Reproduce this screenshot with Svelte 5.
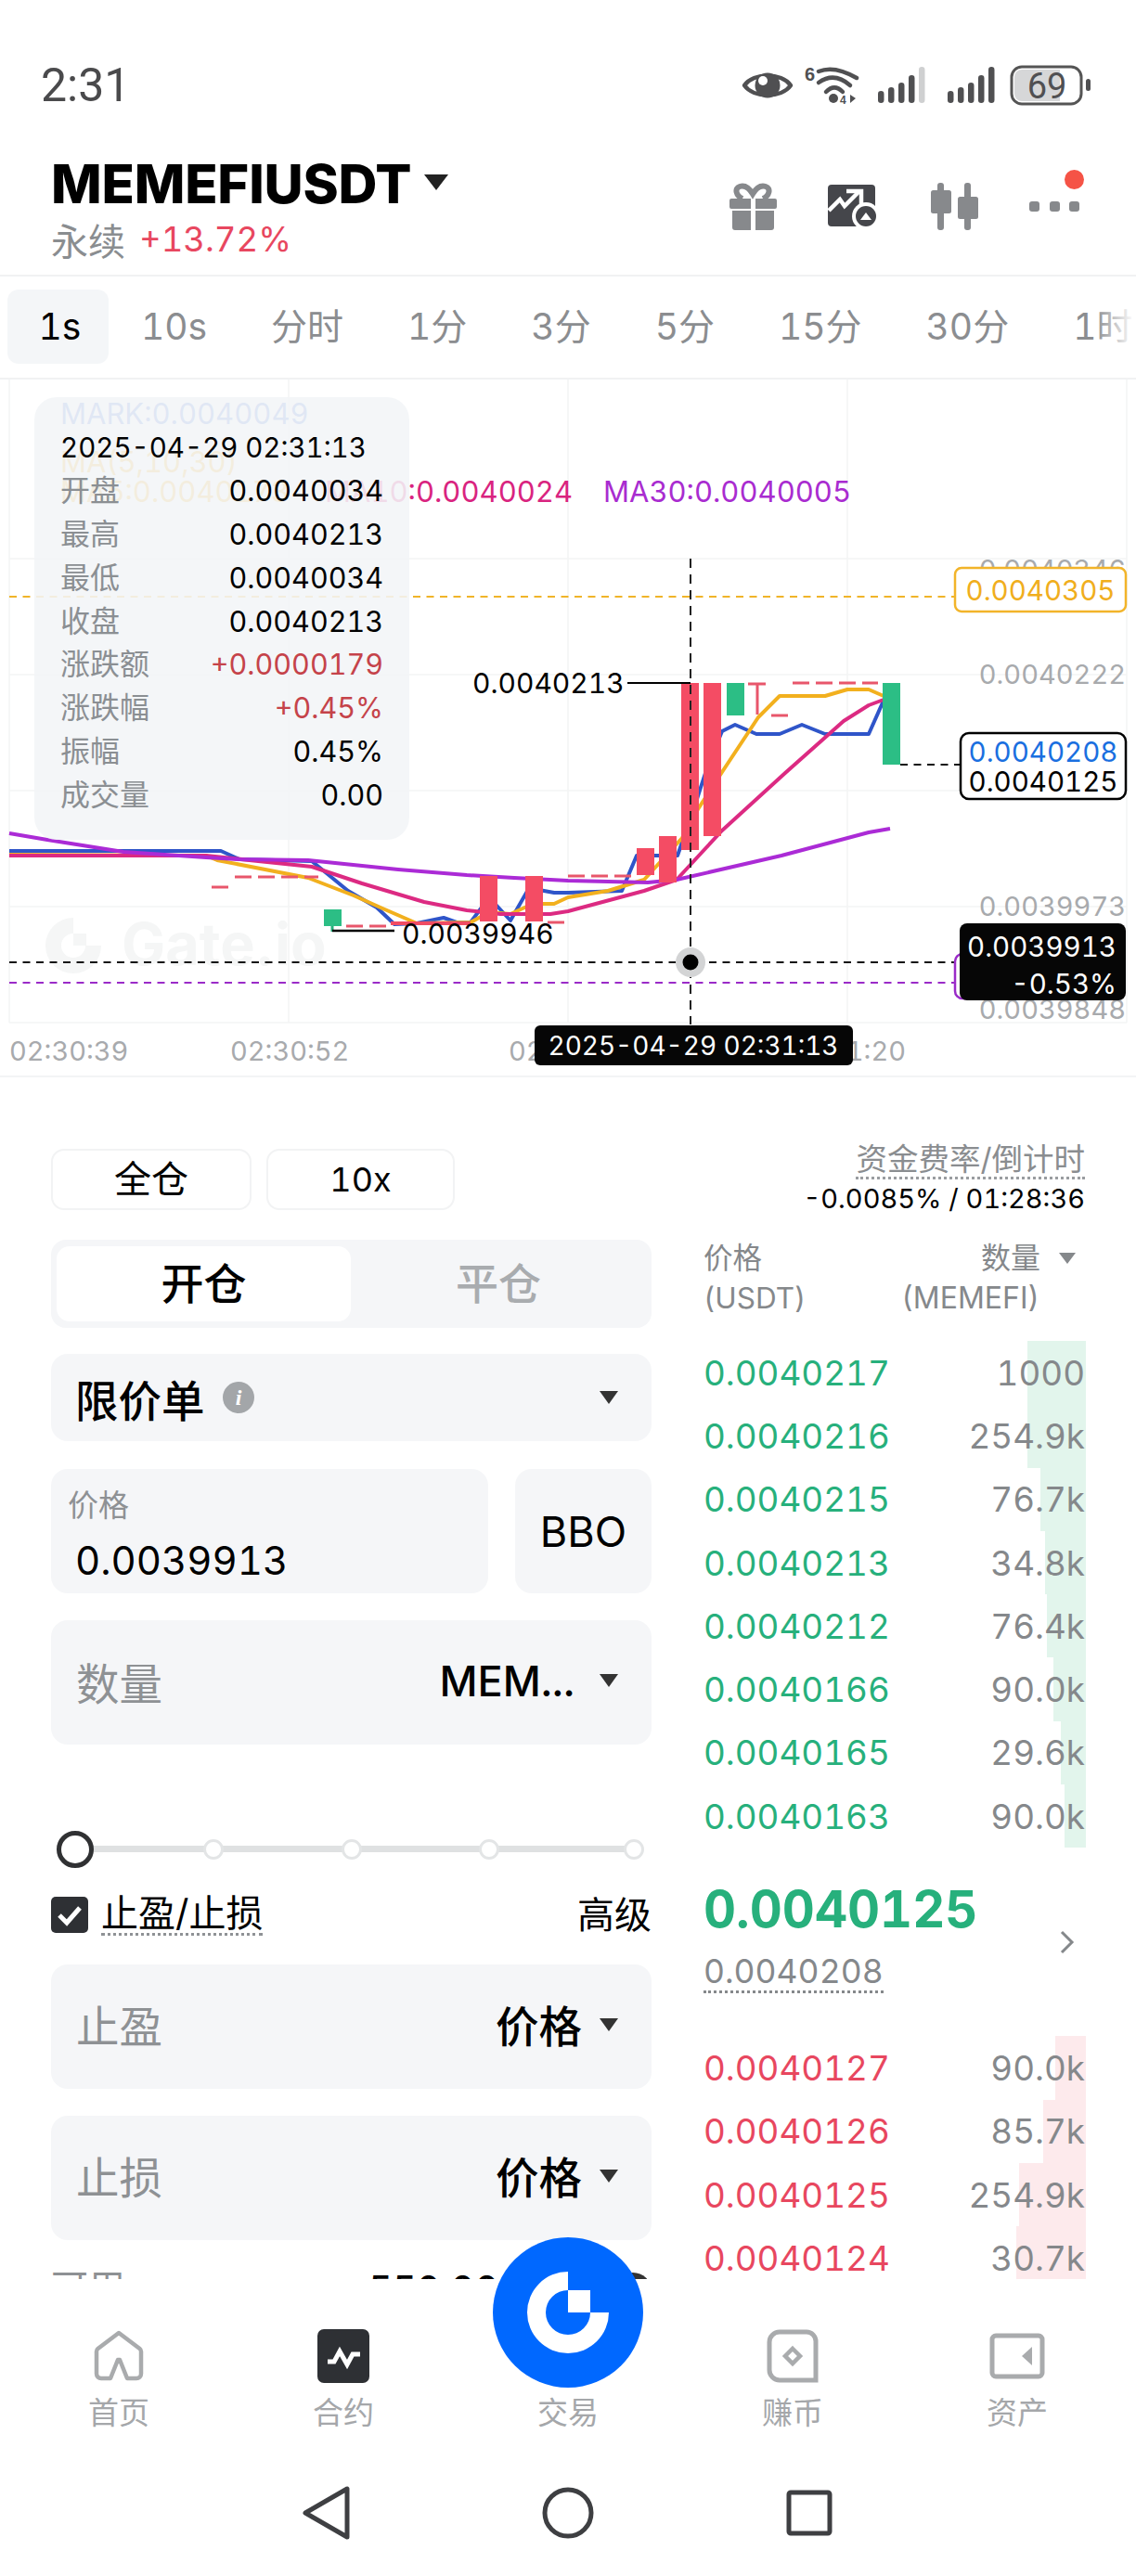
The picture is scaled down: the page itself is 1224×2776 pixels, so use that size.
<script>
  const tabs = ['1s', '10s', '分时', '1分', '3分', '5分', '15分', '30分', '1时'];
  const tipRows = [
    ['开盘', '0.0040034', ''],
    ['最高', '0.0040213', ''],
    ['最低', '0.0040034', ''],
    ['收盘', '0.0040213', ''],
    ['涨跌额', '+0.0000179', 'up'],
    ['涨跌幅', '+0.45%', 'up'],
    ['振幅', '0.45%', ''],
    ['成交量', '0.00', '']
  ];
  const asks = [
    ['0.0040217', '1000', 63], ['0.0040216', '254.9k', 63], ['0.0040215', '76.7k', 49], ['0.0040213', '34.8k', 44],
    ['0.0040212', '76.4k', 42], ['0.0040166', '90.0k', 35], ['0.0040165', '29.6k', 27], ['0.0040163', '90.0k', 23]
  ];
  const bids = [
    ['0.0040127', '90.0k', 33], ['0.0040126', '85.7k', 46], ['0.0040125', '254.9k', 72], ['0.0040124', '30.7k', 75]
  ];
  const sliderStops = [230, 379, 527, 683];
  const lines = [
    { c: '#2f55c9', p: '10,917 238,917 258,926 336,928 375,960 406,978 425,996 449,995 478,989 492,994 507,994 527,967 550,992 570,957 597,962 612,962 670,960 686,922 710,922 730,922 749,867 762,827 778,788 792,781 815,791 840,791 864,781 889,791 936,791 952,755' },
    { c: '#f2b01e', p: '10,921 222,922 234,927 332,946 381,965 410,978 449,995 507,994 527,983 550,985 574,974 597,974 612,967 655,960 694,948 735,903 752,872 778,832 817,773 840,750 889,750 913,743 936,743 952,750' },
    { c: '#dc2a82', p: '10,922 222,922 336,934 390,952 457,972 503,981 539,985 593,985 612,982 694,960 729,948 778,895 846,833 909,777 936,760 952,754' },
    { c: '#ab2bd6', p: '10,898 51,905 133,918 222,924 258,926 332,927 429,937 503,943 554,946 612,949 698,951 729,948 842,922 936,897 959,893' }
  ];
  const candles = [
    { x: 349, y: 980, h: 18, g: true },
    { x: 517, y: 944, h: 49 },
    { x: 566, y: 944, h: 49 },
    { x: 686, y: 914, h: 29 },
    { x: 710, y: 901, h: 50 },
    { x: 734, y: 736, h: 180 },
    { x: 758, y: 736, h: 165 },
    { x: 783, y: 736, h: 35, g: true },
    { x: 951, y: 736, h: 88, g: true }
  ];
  const dojis = [
    [228, 248, 956], [253, 343, 945], [373, 421, 998], [590, 612, 994], [612, 682, 944], [831, 850, 771], [854, 946, 736]
  ];
  const gridY = [602, 727, 852, 977, 1102];
  const gridX = [10, 311, 612, 913, 1214];
  const barH = [13, 17, 22, 30, 39];
</script>

<div class="page">
  <header class="status">
    <span class="time">2:31</span>
    <div class="status-icons">
      <svg class="eye" width="56" height="38" viewBox="0 0 56 38">
        <path d="M3 19C13 5 43 5 53 19C43 33 13 33 3 19Z" fill="none" stroke="#505052" stroke-width="4.5" stroke-linejoin="round" />
        <circle cx="28" cy="19" r="13.5" fill="#505052" />
        <circle cx="23" cy="14" r="5" fill="#fff" />
      </svg>
      <svg width="60" height="44" viewBox="0 0 60 44">
        <text x="1" y="17" class="six">6</text>
        <g fill="none" stroke="#505052" stroke-width="4.5" stroke-linecap="round">
          <path d="M16 7Q33 0 57 14" />
          <path d="M16 19Q33 7 50 22" />
          <path d="M24 29Q33 20 42 29" />
        </g>
        <circle cx="32" cy="36" r="5" fill="#505052" />
        <text x="39" y="42" class="four">4</text>
        <path d="M50 32v9l6-5z" fill="#505052" />
      </svg>
      <svg class="sig" width="52" height="42" viewBox="0 0 52 42">
        {#each barH as h, i}
          <rect x={i * 11} y={40 - h} width="6.5" height={h} rx="3.2" fill={i === 4 ? '#cfd0d1' : '#505052'} />
        {/each}
      </svg>
      <svg class="sig2" width="52" height="42" viewBox="0 0 52 42">
        {#each barH as h, i}
          <rect x={i * 11} y={40 - h} width="6.5" height={h} rx="3.2" fill="#505052" />
        {/each}
      </svg>
      <svg class="batt" width="88" height="44" viewBox="0 0 88 44">
        <rect x="2" y="2" width="75" height="40" rx="11" fill="#fff" stroke="#555" stroke-width="3" />
        <path d="M5 13a8 8 0 0 1 8-8h41v34H13a8 8 0 0 1-8-8z" fill="#d6d7d8" />
        <text x="40" y="35.500" class="batt-t">69</text>
        <rect x="82" y="15" width="5" height="13" rx="2.500" fill="#505052" />
      </svg>
    </div>
  </header>

  <section class="head">
    <div class="head-left">
      <div class="title-row">
        <h1>MEMEFIUSDT</h1>
        <i class="title-caret"></i>
      </div>
      <div class="sub-row"><span class="perp">永续</span><span class="pct">+13.72%</span></div>
    </div>
    <div class="head-icons">
      <svg width="51" height="51" viewBox="0 0 51 51">
        <path d="M14 17C7 14 5 6 11 4c6-2 11 3 14 8 3-5 8-10 14-8 6 2 4 10-3 13" fill="none" stroke="#87898c" stroke-width="6" />
        <path d="M2 17h21v11H2a2 2 0 0 1-2-2v-7a2 2 0 0 1 2-2zM28 17h21a2 2 0 0 1 2 2v7a2 2 0 0 1-2 2H28z" fill="#87898c" />
        <path d="M3 30h20v21H6a3 3 0 0 1-3-3zM28 30h20v18a3 3 0 0 1-3 3H28z" fill="#87898c" />
      </svg>
      <svg width="56" height="51" viewBox="0 0 56 51">
        <rect x="0" y="2" width="51" height="45" rx="4" fill="#45464b" />
        <path d="M1 30L13 18L18 25L34 9" fill="none" stroke="#fff" stroke-width="4.500" />
        <path d="M20 9H36V23" fill="none" stroke="#fff" stroke-width="4.500" />
        <circle cx="41" cy="36" r="15" fill="#fff" />
        <circle cx="41" cy="36" r="11" fill="#45464b" />
        <path d="M35 40h12l-6-8z" fill="#fff" />
      </svg>
      <svg width="51" height="51" viewBox="0 0 51 51" fill="#87898c">
        <rect x="7" y="0" width="7" height="51" rx="3" />
        <rect x="0" y="8" width="22" height="25" rx="2.500" />
        <rect x="36" y="0" width="7" height="51" rx="3" />
        <rect x="29" y="15" width="22" height="24" rx="2.500" />
      </svg>
      <div class="more">
        <b class="red-dot"></b>
        <i></i><i></i><i></i>
      </div>
    </div>
  </section>

  <nav class="tabs">
    {#each tabs as t, i}
      <span class="tab" class:on={i === 0}>{t}</span>
    {/each}
  </nav>

  <section class="chart">
    <svg class="plot" width="1224" height="750" viewBox="0 409 1224 750">
      {#each gridY as y}<line x1="10" x2="1214" y1={y} y2={y} class="grid" />{/each}
      {#each gridX as x}<line x1={x} x2={x} y1="409" y2="1102" class="grid" />{/each}

      <text x="65" y="445" class="t32 ma mark">MARK:0.0040049</text>
      <text x="65" y="497" class="t32 ma faintY">MA(5,10,30)</text>
      <text x="65" y="529" class="t32 ma faintY">MA5:0.0040173</text>
      <text x="350" y="529" class="t32 ma mag">MA10:0.0040024</text>
      <text x="650" y="529" class="t32 ma pur">MA30:0.0040005</text>

      <g class="wm">
        <path d="M79 989A30 30 0 1 0 109 1019H92A13 13 0 1 1 79 1006Z" />
        <rect x="79" y="1006" width="14" height="13" />
        <text x="131" y="1040">Gate.io</text>
      </g>

      {#each lines as l}
        <polyline points={l.p} fill="none" stroke={l.c} stroke-width="4" stroke-linejoin="round" />
      {/each}

      {#each dojis as d}
        <line x1={d[0]} x2={d[1]} y1={d[2]} y2={d[2]} class="doji" />
      {/each}
      <line x1="421" x2="507" y1="995" y2="995" stroke="#f04c63" stroke-width="4" />
      <path d="M806 737H825M816 737V770" fill="none" stroke="#e8566b" stroke-width="3" />
      <line x1="358" x2="358" y1="998" y2="1004" stroke="#27b07c" stroke-width="3" />

      {#each candles as c}
        <rect x={c.x} y={c.y} width="19" height={c.h} fill={c.g ? '#2cbe85' : '#f44c64'} />
      {/each}

      <line x1="10" x2="1028" y1="643" y2="643" class="dash yellow" />
      <line x1="10" x2="1030" y1="1037" y2="1037" class="dash black" />
      <line x1="10" x2="1030" y1="1059" y2="1059" class="dash purple" />
      <line x1="970" x2="1034" y1="824" y2="824" class="dash black" />
      <line x1="744" x2="744" y1="602" y2="1104" class="vdash" />

      <path d="M358 1003H425" stroke="#000" stroke-width="2.500" fill="none" />
      <path d="M676 736H744" stroke="#000" stroke-width="2" fill="none" />
      <text x="509" y="736" class="t32 c">0.0040213</text>
      <text x="433" y="1006" class="t32 c">0.0039946</text>

      <circle cx="744" cy="1037" r="16" fill="#d3d4d5" />
      <circle cx="744" cy="1037" r="8.500" fill="#000" />

      <text x="1213" y="613" class="t30 axis e">0.0040346</text>
      <text x="1213" y="726" class="t30 axis e">0.0040222</text>
      <text x="1213" y="976" class="t30 axis e">0.0039973</text>
      <text x="1213" y="1087" class="t30 axis e">0.0039848</text>

      <rect x="1029" y="612" width="184" height="47" rx="7" fill="#fff" stroke="#f2b429" stroke-width="2.500" />
      <text x="1121" y="636" class="t31 yel m">0.0040305</text>

      <rect x="1035" y="790" width="178" height="71" rx="9" fill="#fff" stroke="#000" stroke-width="2.500" />
      <text x="1124" y="810" class="t31 blu m">0.0040208</text>
      <text x="1124" y="842" class="t31 c m">0.0040125</text>

      <rect x="1029" y="1028" width="30" height="48" rx="8" fill="#fff" stroke="#9a2bc8" stroke-width="2.500" />
      <rect x="1034" y="995" width="179" height="83" rx="8" fill="#060606" />
      <text x="1203" y="1020" class="t31 w e">0.0039913</text>
      <text x="1203" y="1060" class="t31 w e">-0.53%</text>

      <text x="10" y="1132" class="t30 axis">02:30:39</text>
      <text x="248" y="1132" class="t30 axis">02:30:52</text>
      <text x="548" y="1132" class="t30 axis">02:31:06</text>
      <text x="976" y="1132" class="t30 axis e">02:31:20</text>

      <rect x="576" y="1105" width="343" height="43" rx="6" fill="#060606" />
      <text x="747" y="1127" class="t31 date w m">2025-04-29 02:31:13</text>
    </svg>

    <div class="tip">
      <div class="tip-date">2025-04-29 02:31:13</div>
      {#each tipRows as r}
        <div class="tip-row"><span class="k">{r[0]}</span><span class="v" class:up={r[2] === 'up'}>{r[1]}</span></div>
      {/each}
    </div>
  </section>

  <main class="trade">
    <div class="form">
      <div class="lev">
        <span class="pill p1">全仓</span>
        <span class="pill p2">10x</span>
      </div>

      <div class="seg">
        <span class="seg-on">开仓</span>
        <span class="seg-off">平仓</span>
      </div>

      <div class="box order">
        <span class="strong">限价单</span>
        <svg class="info" width="34" height="34" viewBox="0 0 34 34">
          <circle cx="17" cy="17" r="17" fill="#a3a6a9" />
          <text x="17" y="25" class="i">i</text>
        </svg>
        <i class="caret push"></i>
      </div>

      <div class="price-row">
        <div class="box price">
          <span class="lab">价格</span>
          <span class="val">0.0039913</span>
        </div>
        <div class="box bbo">BBO</div>
      </div>

      <div class="box qty">
        <span class="ph">数量</span>
        <span class="unit push">MEM...</span>
        <i class="caret"></i>
      </div>

      <div class="slider">
        <span class="track"></span>
        <span class="knob"></span>
        {#each sliderStops as s}
          <span class="stop" style="left:{s - 55 - 11}px"></span>
        {/each}
      </div>

      <div class="tp-row">
        <svg width="40" height="39" viewBox="0 0 40 39">
          <rect width="40" height="39" rx="5" fill="#2e3034" />
          <path d="M9 20l8 8L31 12" fill="none" stroke="#fff" stroke-width="5" />
        </svg>
        <span class="dotted tp-t">止盈/止损</span>
        <span class="adv">高级</span>
      </div>

      <div class="box tpsl first">
        <span class="ph">止盈</span>
        <span class="strong push">价格</span>
        <i class="caret"></i>
      </div>
      <div class="box tpsl">
        <span class="ph">止损</span>
        <span class="strong push">价格</span>
        <i class="caret"></i>
      </div>

      <div class="avail">
        <span class="k2">可用</span>
        <span class="amt">550.00</span>
        <i class="dotblack"></i>
      </div>
    </div>

    <aside class="book">
      <div class="fund-t">资金费率/倒计时</div>
      <div class="fund-v">-0.0085% / 01:28:36</div>
      <div class="book-head">
        <div class="bh-l">价格<br />(USDT)</div>
        <div class="bh-r">
          <div class="bh-r1">数量<i class="caret small"></i></div>
          <div class="bh-r2">(MEMEFI)</div>
        </div>
      </div>

      {#each asks as a}
        <div class="row ask">
          <span class="depth" style="width:{a[2]}px"></span>
          <span class="px">{a[0]}</span><span class="am">{a[1]}</span>
        </div>
      {/each}

      <div class="mid">
        <div>
          <div class="last">0.0040125</div>
          <div class="markp">0.0040208</div>
        </div>
        <svg class="chev" width="16" height="26" viewBox="0 0 16 26">
          <path d="M2 2l11 11L2 24" fill="none" stroke="#85888b" stroke-width="3" />
        </svg>
      </div>

      {#each bids as b}
        <div class="row bid">
          <span class="depth" style="width:{b[2]}px"></span>
          <span class="px">{b[0]}</span><span class="am">{b[1]}</span>
        </div>
      {/each}
    </aside>
  </main>

  <footer class="tabbar">
    <div class="nav">
      <svg width="56" height="56" viewBox="0 0 56 56" fill="none" stroke="#a9abad" stroke-width="4.500" stroke-linejoin="round">
        <path d="M19 52H9a5 5 0 0 1-5-5V23a4 4 0 0 1 1.500-3L28 3l22.500 17a4 4 0 0 1 1.500 3v24a5 5 0 0 1-5 5H37L29 32h-2z" />
      </svg>
      <span>首页</span>
    </div>
    <div class="nav">
      <svg width="56" height="58" viewBox="0 0 56 58">
        <rect width="56" height="58" rx="7" fill="#2e3034" />
        <path d="M11 35h7l6-11 8 14 6-11h8" fill="none" stroke="#fff" stroke-width="5" />
      </svg>
      <span>合约</span>
    </div>
    <div class="nav"><div class="slot"></div><span>交易</span></div>
    <div class="nav">
      <svg width="56" height="58" viewBox="0 0 56 58" fill="none" stroke="#a9abad" stroke-width="5">
        <path d="M3 14a11 11 0 0 1 11-11h29a10 10 0 0 1 10 10v42H14A11 11 0 0 1 3 44z" />
        <path d="M28 21l8 8-8 8-8-8z" stroke-width="4.500" />
      </svg>
      <span>赚币</span>
    </div>
    <div class="nav">
      <svg width="60" height="50" viewBox="0 0 60 50" fill="none" stroke="#a9abad" stroke-width="5">
        <rect x="3" y="3" width="54" height="44" rx="4" />
        <path d="M46 15L35 25l11 10z" fill="#a9abad" stroke="none" />
      </svg>
      <span>资产</span>
    </div>
  </footer>

  <div class="sys">
    <svg width="60" height="60" viewBox="0 0 60 60" fill="none" stroke="#3e3f42" stroke-width="5" stroke-linejoin="round">
      <path d="M52 4V56L7 30Z" />
    </svg>
    <svg width="60" height="60" viewBox="0 0 60 60" fill="none" stroke="#3e3f42" stroke-width="5">
      <circle cx="30" cy="30" r="25" />
    </svg>
    <svg width="60" height="60" viewBox="0 0 60 60" fill="none" stroke="#3e3f42" stroke-width="5" stroke-linejoin="round">
      <rect x="8" y="8" width="44" height="44" rx="2" />
    </svg>
  </div>

  <div class="fab">
    <svg width="162" height="162" viewBox="0 0 162 162">
      <circle cx="81" cy="81" r="81" fill="#0068ff" />
      <path d="M81 37A44 44 0 1 0 125 81H105A24 24 0 1 1 81 57Z" fill="#fff" />
      <rect x="81" y="57" width="24" height="24" fill="#fff" />
    </svg>
  </div>
</div>

<style>
  :global(body) { margin: 0; background: #fff; }
  .page {
    position: relative;
    width: 1224px;
    height: 2776px;
    overflow: hidden;
    background: #fff;
    color: #000;
    font-family: Inter, "Noto Sans CJK SC", sans-serif;
    font-variant-numeric: tabular-nums;
    font-feature-settings: "tnum" 1;
  }
  .status {
    display: flex;
    justify-content: space-between;
    align-items: center;
    height: 60px;
    padding: 62px 48px 0 44px;
  }
  .time { font-size: 50px; color: #4a4a4c; font-family: Roboto, sans-serif; line-height: 60px; }
  .status-icons { display: flex; align-items: center; }
  .eye { margin-right: 11px; }
  .sig { margin-left: 20px; }
  .sig2 { margin-left: 23px; }
  .batt { margin-left: 15px; }
  .six { font: 700 20px "Liberation Sans", sans-serif; fill: #505052; }
  .four { font: 700 12px "Liberation Sans", sans-serif; fill: #505052; }
  .batt-t { font: 400 38px Roboto, sans-serif; fill: #505052; text-anchor: middle; }

  .head {
    box-sizing: border-box;
    height: 176px;
    display: flex;
    justify-content: space-between;
    padding: 46px 60px 0 55px;
    border-bottom: 2px solid #f1f2f3;
  }
  .title-row { display: flex; align-items: center; height: 60px; }
  h1 { margin: 0; font-size: 58px; font-weight: 800; line-height: 60px; letter-spacing: -0.2px; }
  .title-caret {
    width: 0; height: 0; margin: -4px 0 0 14px;
    border-left: 13px solid transparent;
    border-right: 13px solid transparent;
    border-top: 17px solid #222;
  }
  .sub-row { display: flex; align-items: center; height: 44px; margin-top: 8px; }
  .perp { font-size: 40px; color: #8a8d90; }
  .pct { font-size: 36.500px; color: #e8475f; margin-left: 15px; }
  .head-icons { display: flex; gap: 55px; padding-top: 29px; align-items: flex-start; }
  .more { position: relative; display: flex; gap: 10.500px; width: 55px; padding-top: 20px; }
  .more i { width: 11px; height: 11px; border-radius: 3px; background: #87898c; }
  .red-dot { position: absolute; left: 38px; top: -14px; width: 21px; height: 21px; border-radius: 50%; background: #f55346; }

  .tabs {
    position: relative;
    box-sizing: border-box;
    display: flex;
    height: 111px;
    padding: 14px 0 0 8px;
    overflow: hidden;
    border-bottom: 2px solid #f1f2f3;
    font-size: 39px;
    color: #8b8d90;
    white-space: nowrap;
  }
  .tabs::after {
    content: "";
    position: absolute;
    right: 0;
    top: 0;
    bottom: 0;
    width: 44px;
    background: linear-gradient(90deg, rgba(255,255,255,0), #fff 95%);
  }
  .tab { padding: 0 34.500px; height: 80px; line-height: 80px; border-radius: 12px; flex: none; }
  .tab.on { background: #f4f6f8; color: #000; padding: 0 30px 0 33.500px; }

  .chart { position: relative; height: 750px; border-bottom: 2px solid #f3f4f5; }
  .plot { display: block; }
  .grid { stroke: #f3f4f5; stroke-width: 1.500; }
  .t32, .t31, .t30 { font-family: Inter, sans-serif; dominant-baseline: central; font-feature-settings: "tnum" 1; }
  .t32 { font-size: 30px; }
  .t32.ma { font-size: 31px; }
  .t31 { font-size: 29.500px; }
  .t31.date { font-size: 28px; }
  .t30 { font-size: 29px; }
  .e { text-anchor: end; }
  .m { text-anchor: middle; }
  .c { fill: #000; }
  .w { fill: #fff; }
  .axis { fill: #a8aaad; }
  .mark { fill: #5a82dc; }
  .faintY { fill: #f0b429; }
  .mag { fill: #d9247f; }
  .pur { fill: #a92cd0; }
  .yel { fill: #f0ae1d; }
  .blu { fill: #1a6fe0; }
  .wm { fill: #f5f6f6; font: 700 63px Inter, sans-serif; }
  .doji { stroke: #e8566b; stroke-width: 3; stroke-dasharray: 18 7; }
  .dash { stroke-width: 2; stroke-dasharray: 8 6.500; }
  .dash.yellow { stroke: #f0b429; }
  .dash.black { stroke: #111; }
  .dash.purple { stroke: #9a2bc8; }
  .vdash { stroke: #222; stroke-width: 2; stroke-dasharray: 10 7; }

  .tip {
    position: absolute;
    left: 37px;
    top: 19px;
    box-sizing: border-box;
    width: 404px;
    height: 477px;
    padding: 31px 28px 0;
    border-radius: 24px;
    background: rgba(243, 245, 247, 0.88);
    font-size: 30.500px;
  }
  .tip-date, .tip-row { height: 46.900px; line-height: 46.900px; white-space: nowrap; }
  .tip-date { font-size: 29.500px; }
  .tip-row { display: flex; justify-content: space-between; }
  .k { color: #8b8f93; font-size: 32px; }
  .v.up { color: #c5434a; }

  .trade {
    box-sizing: border-box;
    height: 1295px;
    overflow: hidden;
    display: grid;
    grid-template-columns: 647px 412px;
    column-gap: 56px;
    padding: 0 0 0 55px;
  }
  .form { padding-top: 77px; }
  .lev { display: flex; gap: 16px; margin-bottom: 32px; }
  .pill {
    box-sizing: border-box;
    height: 66px;
    line-height: 62px;
    text-align: center;
    border: 2px solid #f2f3f4;
    border-radius: 14px;
    font-size: 36px;
  }
  .p1 { width: 216px; font-size: 40px; }
  .p2 { width: 203px; }
  .seg {
    box-sizing: border-box;
    display: flex;
    height: 95px;
    padding: 7px 6px;
    margin-bottom: 28px;
    border-radius: 16px;
    background: #f5f6f8;
    font-size: 46px;
    font-weight: 500;
    line-height: 81px;
    text-align: center;
  }
  .seg-on { width: 317px; background: #fff; border-radius: 14px; }
  .seg-off { flex: 1; color: #a9acaf; }
  .box { display: flex; align-items: center; box-sizing: border-box; background: #f5f6f8; border-radius: 18px; }
  .push { margin-left: auto; }
  .order { height: 94px; padding: 0 36px 0 26px; margin-bottom: 30px; }
  .strong { font-size: 46.500px; font-weight: 500; }
  .info { margin-left: 19px; }
  .i { font: italic 700 24px "Liberation Serif", serif; fill: #fff; text-anchor: middle; }
  .caret {
    flex: none;
    width: 0; height: 0;
    border-left: 10.500px solid transparent;
    border-right: 10.500px solid transparent;
    border-top: 14px solid #333;
  }
  .caret.small { margin-left: 20px; border-left-width: 9.500px; border-right-width: 9.500px; border-top-width: 12px; border-top-color: #85888b; }
  .price-row { display: flex; gap: 29px; margin-bottom: 29px; }
  .price { width: 471px; height: 134px; padding: 18px 0 0 18px; flex-direction: column; align-items: flex-start; }
  .lab { font-size: 33px; color: #8e9194; line-height: 42px; }
  .val { font-size: 42px; line-height: 58px; margin: 10px 0 0 8px; }
  .bbo { width: 147px; height: 134px; justify-content: center; font-size: 45px; }
  .qty { height: 134px; padding: 0 36px 4px 27px; }
  .ph { font-size: 46.500px; color: #8e9194; }
  .unit { font-size: 45px; font-weight: 500; margin-right: 27px; }
  .slider { position: relative; height: 40px; margin-top: 93px; }
  .track { position: absolute; left: 20px; right: 15px; top: 16px; height: 7px; background: #dfe1e2; }
  .knob { position: absolute; left: 6px; top: 0; box-sizing: border-box; width: 40px; height: 40px; border: 5px solid #303133; border-radius: 50%; background: #fff; }
  .stop { position: absolute; top: 9px; box-sizing: border-box; width: 22px; height: 22px; border: 3px solid #e3e5e6; border-radius: 50%; background: #fff; }
  .tp-row { display: flex; align-items: center; height: 45px; margin-top: 28px; }
  .tp-t { font-size: 40px; margin-left: 14px; }
  .dotted { box-sizing: border-box; border-bottom: 3px dotted #8f9295; line-height: 42px; height: 45px; }
  .adv { font-size: 40px; margin-left: auto; margin-top: -6px; }
  .tpsl { height: 134px; padding: 0 36px 4px 27px; }
  .tpsl .ph, .tpsl .strong { margin-top: -4px; }
  .tpsl.first { margin-top: 31px; margin-bottom: 29px; }
  .tpsl .strong { margin-right: 19px; }
  .avail { display: flex; align-items: center; height: 48px; margin-top: 25px; font-size: 40px; }
  .k2 { color: #8e9194; }
  .amt { margin-left: 262px; margin-top: 6px; font-weight: 500; }
  .dotblack { margin-left: auto; margin-top: 12px; width: 40px; height: 40px; border-radius: 50%; background: #333; }

  .book { display: flex; flex-direction: column; }
  .fund-t {
    align-self: flex-end;
    height: 38px;
    line-height: 38px;
    margin: 69px 1px 0 0;
    font-size: 33.500px;
    color: #8a8d90;
    border-bottom: 3px dotted #9a9da0;
  }
  .fund-v { align-self: flex-end; font-size: 29px; line-height: 36px; margin: 3px 1px 0 0; }
  .book-head { display: flex; justify-content: space-between; margin-top: 24px; margin-bottom: 25px; color: #85888b; font-size: 32px; line-height: 43px; height: 86px; }
  .bh-l { font-size: 31.500px; }
  .bh-r { text-align: right; padding-right: 11px; }
  .bh-r1 { display: flex; align-items: center; justify-content: flex-end; }
  .bh-r2 { padding-right: 39px; }
  .row {
    position: relative;
    display: flex;
    justify-content: space-between;
    align-items: center;
    height: 68.300px;
    font-size: 36.800px;
  }
  .px, .am { position: relative; }
  .depth { position: absolute; right: 0; top: 0; bottom: 0; }
  .am { color: #85888b; padding-right: 1px; }
  .ask .px { color: #27b07c; }
  .ask .depth { background: #e2f5ec; }
  .bid .px { color: #e8475f; }
  .bid .depth { background: #fdeaec; }
  .mid { height: 203px; display: flex; justify-content: space-between; }
  .last { margin-top: 36px; font-size: 54.300px; line-height: 60px; font-weight: 700; color: #27b07c; }
  .markp {
    display: inline-block;
    margin-top: 18px;
    font-size: 35.500px;
    line-height: 40px;
    color: #85888b;
    border-bottom: 3px dotted #85888b;
  }
  .chev { margin: 89px 12px 0 0; }

  .tabbar { display: flex; padding: 54px 0 0 7px; height: 116px; box-sizing: content-box; }
  .nav { width: 242px; display: flex; flex-direction: column; align-items: center; }
  .nav svg, .slot { height: 58px; flex: none; display: block; }
  .nav span { margin-top: 10px; font-size: 33px; line-height: 44px; color: #a5a7aa; }
  .sys { display: flex; justify-content: center; gap: 200px; padding-top: 52px; }
  .fab { position: absolute; left: 531px; top: 2411px; width: 162px; height: 162px; }
  .fab svg { display: block; }
</style>
